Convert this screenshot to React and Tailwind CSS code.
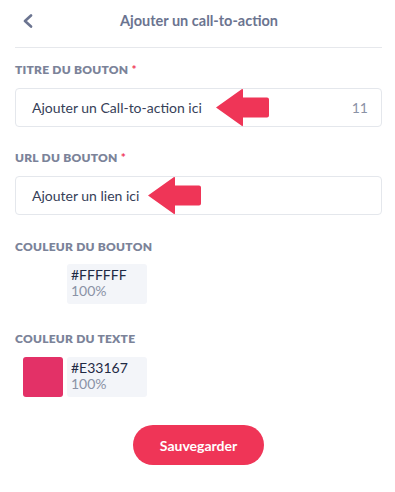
import React, { useState } from "react";

const FONT = "font-['Lato','Noto_Sans',sans-serif]";

function Arrow({ className }) {
  return (
    <svg className={className} width="54" height="39" viewBox="0 0 54 39" fill="none">
      <path d="M1 19.5 L27 1 Q28 0.5 28 2 L28 9.5 L52 9.5 Q54 9.5 54 11.5 L54 27.5 Q54 29.5 52 29.5 L28 29.5 L28 37 Q28 38.5 27 38 Z" fill="#ef3557" />
    </svg>
  );
}

function Label({ children, required }) {
  return (
    <p className="text-[12px] leading-[14px] font-extrabold uppercase tracking-[0.02em] text-[#7b8399]">
      {children}
      {required && <span className="font-bold text-[#ef3557]"> *</span>}
    </p>
  );
}

function ColorRow({ hex, swatch }) {
  return (
    <div className="flex items-center gap-[4px] pl-[8px]">
      <div className={`h-[40px] w-[40px] rounded-[3px] ${swatch}`} />
      <div className="h-[40px] w-[80px] rounded-[3px] bg-[#f3f5f9] px-[4px] pt-[3px]">
        <p className="text-[14px] leading-[16px] text-[#1f2a44]">{hex}</p>
        <p className="text-[14px] leading-[16px] text-[#8a92a6]">100%</p>
      </div>
    </div>
  );
}

export default function App() {
  const [title] = useState("Ajouter un Call-to-action ici");
  const [url] = useState("Ajouter un lien ici");

  return (
    <div className={`w-[395px] h-[492px] bg-white pl-[15px] pr-[13px] ${FONT}`}>
      <div className="grid h-[48px] grid-cols-[1fr_auto_1fr] items-center border-b border-[#e6e8ec] pb-[6px]">
        <div className="pl-[8px]">
          <svg width="10" height="14" viewBox="0 0 10 14" fill="none">
            <path d="M8 1.5 L2 7 L8 12.5" stroke="#6b7490" strokeWidth="2.6" strokeLinecap="round" strokeLinejoin="round" />
          </svg>
        </div>
        <p className="pl-[1px] text-[14.5px] font-bold text-[#6b7490]">Ajouter un call-to-action</p>
        <div />
      </div>

      <div className="mt-[15px]">
        <Label required>Titre du bouton</Label>
      </div>
      <div className="relative mt-[11px] flex h-[39px] items-center justify-between rounded-[4px] border border-[#e4e7ec] pl-[16px] pr-[13px]">
        <span className="text-[14px] text-[#364058]">{title}</span>
        <span className="text-[14px] text-[#8a92a6]">11</span>
        <Arrow className="absolute left-[199px] top-[-1px]" />
      </div>

      <div className="mt-[24px]">
        <Label required>URL du bouton</Label>
      </div>
      <div className="relative mt-[11px] flex h-[39px] items-center rounded-[4px] border border-[#e4e7ec] pl-[16px] pr-[13px]">
        <span className="text-[14px] text-[#364058]">{url}</span>
        <Arrow className="absolute left-[131px] top-[-1px]" />
      </div>

      <div className="mt-[25px]">
        <Label>Couleur du bouton</Label>
      </div>
      <div className="mt-[10px]">
        <ColorRow hex="#FFFFFF" swatch="bg-white" />
      </div>

      <div className="mt-[28px]">
        <Label>Couleur du texte</Label>
      </div>
      <div className="mt-[11px]">
        <ColorRow hex="#E33167" swatch="bg-[#e33167]" />
      </div>

      <div className="mt-[28px] flex justify-center">
        <button className="h-[40px] w-[131px] rounded-full bg-[#ef3557] text-[14px] font-bold text-white">
          Sauvegarder
        </button>
      </div>
    </div>
  );
}
